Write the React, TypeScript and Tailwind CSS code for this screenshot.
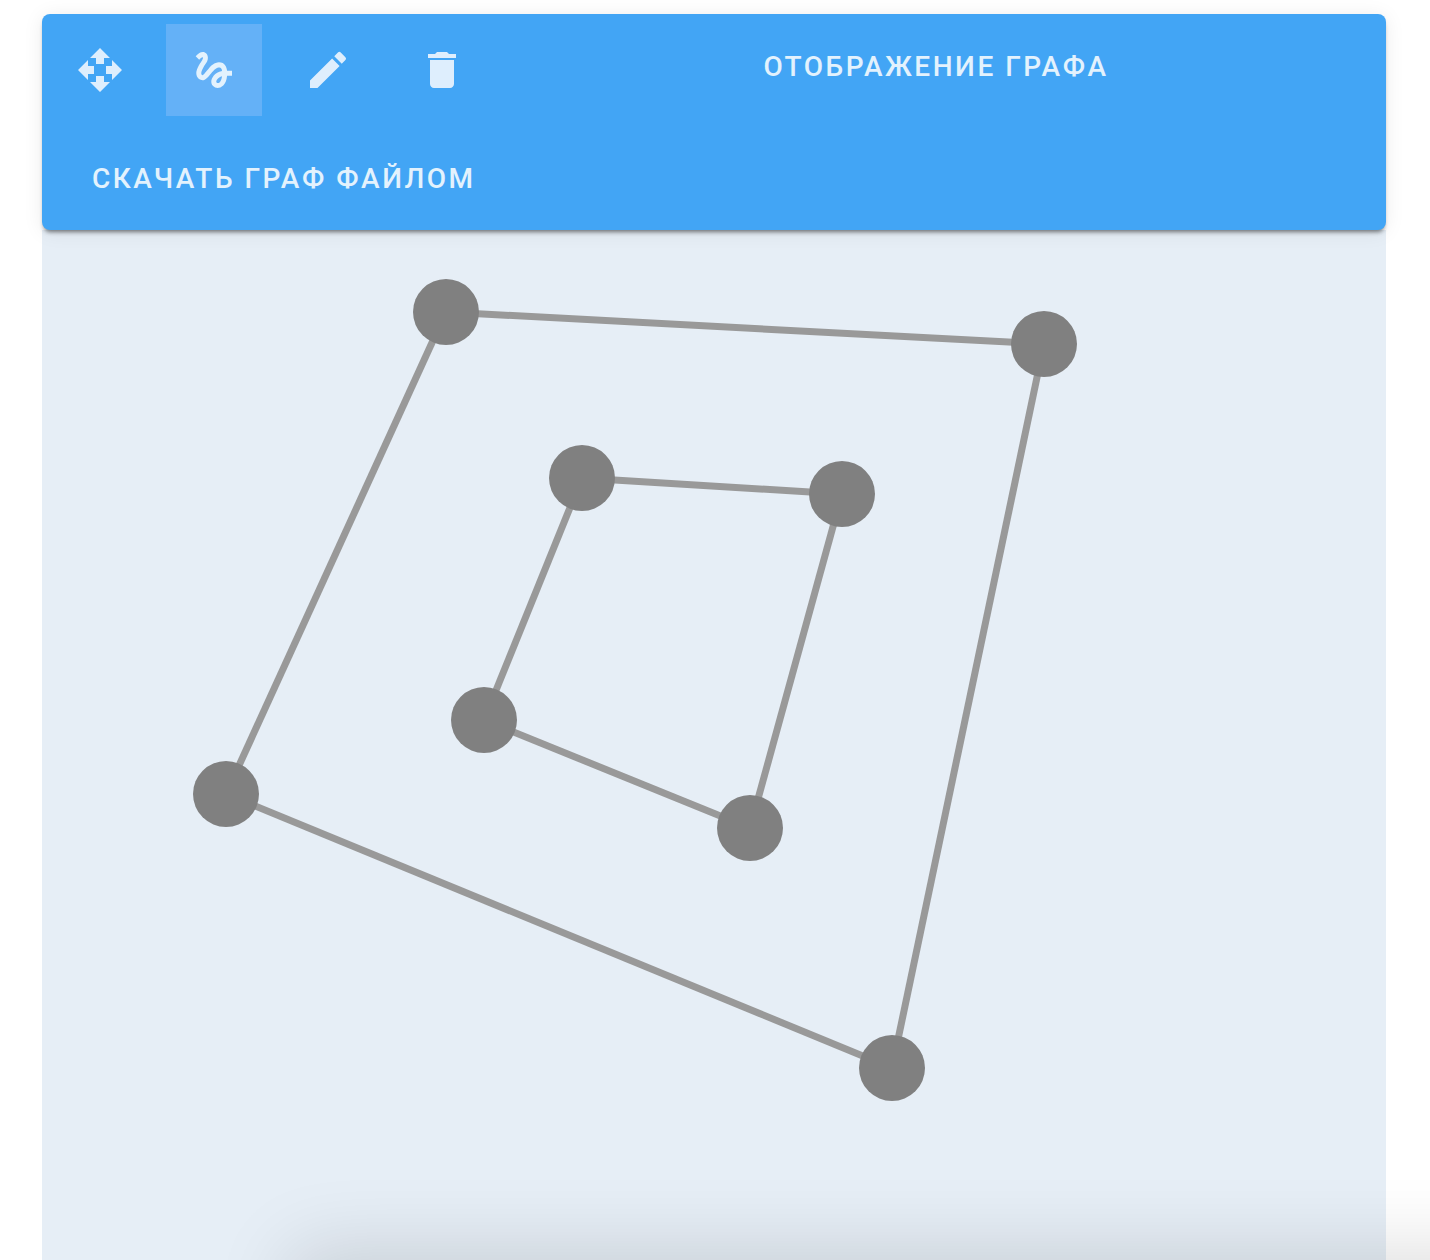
import { useState } from "react";
import { MdDelete, MdEdit, MdGesture, MdOpenWith } from "react-icons/md";

type Point = { x: number; y: number };

const tools = [
  { id: "move", label: "Переместить", Icon: MdOpenWith },
  { id: "draw", label: "Рисовать", Icon: MdGesture },
  { id: "edit", label: "Редактировать", Icon: MdEdit },
  { id: "delete", label: "Удалить", Icon: MdDelete },
];

const nodes: Point[] = [
  { x: 404, y: 82 },
  { x: 1002, y: 114 },
  { x: 850, y: 838 },
  { x: 184, y: 564 },
  { x: 540, y: 248 },
  { x: 800, y: 264 },
  { x: 708, y: 598 },
  { x: 442, y: 490 },
];

const edges = [
  [0, 1],
  [1, 2],
  [2, 3],
  [3, 0],
  [4, 5],
  [5, 6],
  [6, 7],
  [7, 4],
];

function Toolbar() {
  const [active, setActive] = useState("draw");
  return (
    <header className="relative rounded-lg bg-[#42a5f5] pt-2.5 pb-2 pl-2.5 shadow-[0_4px_4px_-2px_rgba(0,0,0,0.5),0_2px_20px_rgba(0,0,0,0.08)]">
      <div className="flex items-start">
        <div className="flex shrink-0 gap-[18px]">
          {tools.map(({ id, label, Icon }) => (
            <button
              key={id}
              type="button"
              aria-label={label}
              aria-pressed={active === id}
              onClick={() => setActive(id)}
              className={
                active === id
                  ? "flex h-[92px] w-24 items-center justify-center bg-[#64b1f7] text-[#e3f2fd]"
                  : "flex h-[92px] w-24 items-center justify-center text-[#deeefd]"
              }
            >
              <Icon size={48} />
            </button>
          ))}
        </div>
        <div className="flex flex-1 justify-center pr-1">
          <TextButton>Отображение графа</TextButton>
        </div>
      </div>
      <div className="flex pt-5 pl-2">
        <TextButton>Скачать граф файлом</TextButton>
      </div>
    </header>
  );
}

function TextButton({ children }: { children: string }) {
  return (
    <button
      type="button"
      className="h-[86px] px-8 text-[28px] leading-8 font-medium tracking-[0.09em] whitespace-nowrap text-[#e3f2fd] uppercase"
    >
      {children}
    </button>
  );
}

function GraphCanvas() {
  return (
    <main className="flex-1 overflow-hidden bg-[#e6eef6]">
      <svg className="block h-[1030px] w-full" role="img" aria-label="Граф">
        <g stroke="#999999" strokeWidth={7}>
          {edges.map(([a, b]) => (
            <line
              key={`${a}-${b}`}
              x1={nodes[a].x}
              y1={nodes[a].y}
              x2={nodes[b].x}
              y2={nodes[b].y}
            />
          ))}
        </g>
        <g fill="#808080">
          {nodes.map(({ x, y }) => (
            <circle key={`${x}-${y}`} cx={x} cy={y} r={33} />
          ))}
        </g>
      </svg>
    </main>
  );
}

export default function App() {
  return (
    <div className="relative flex min-h-screen flex-col overflow-hidden bg-white pt-3.5 pr-11 pl-[42px] font-[Roboto,sans-serif]">
      <Toolbar />
      <GraphCanvas />
      {/* Shadow rising from the panel docked below the view */}
      <div className="pointer-events-none absolute top-full -right-40 left-[300px] h-40 shadow-[0_0_80px_8px_rgba(0,0,0,0.14)]" />
    </div>
  );
}
